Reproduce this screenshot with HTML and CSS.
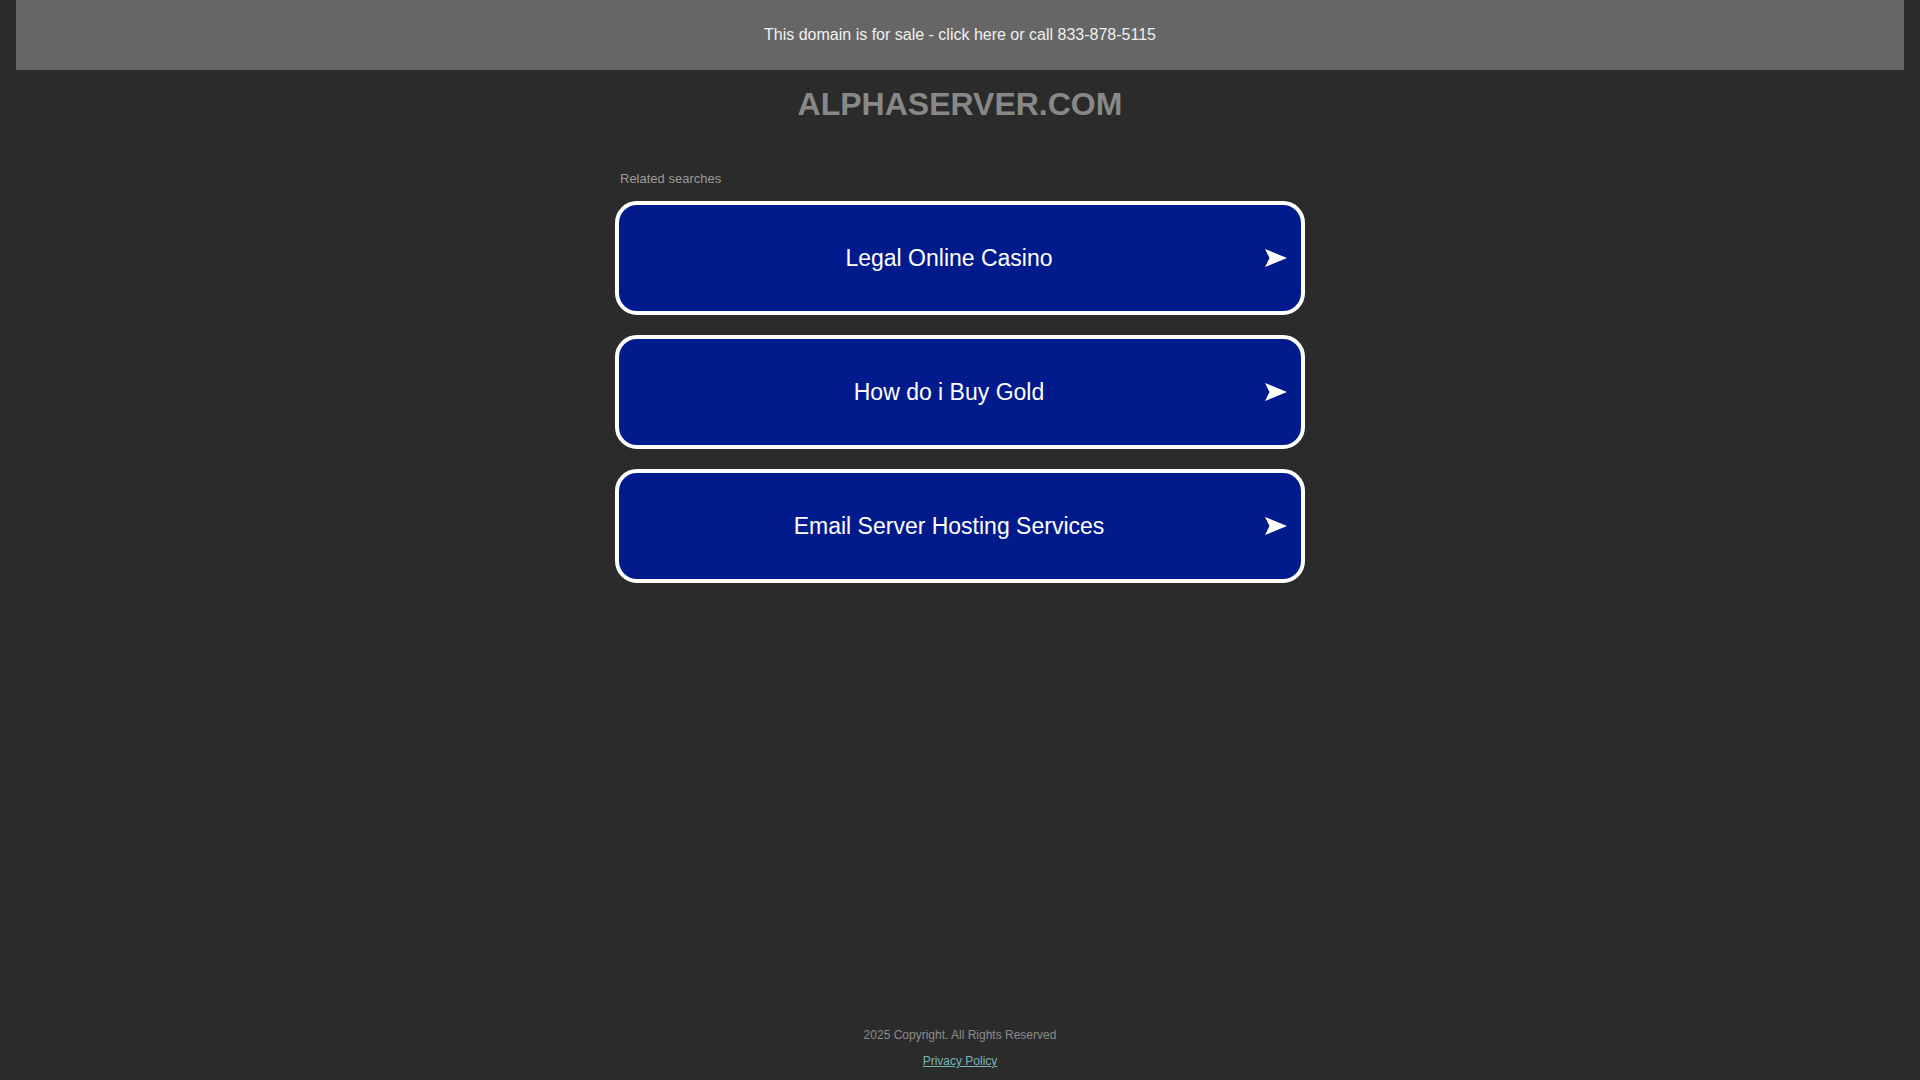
FILE: index.html
```html
<!DOCTYPE html>
<html lang="en">
<head>
<meta charset="utf-8">
<title>alphaserver.com</title>
<link rel="stylesheet" href="styles.css">
</head>
<body>
<div class="page">
  <div class="topbar"><a class="sale" href="#">This domain is for sale - click here or call 833-878-5115</a></div>
  <h1 class="domain">ALPHASERVER.COM</h1>
  <main class="searches">
    <div class="related">Related searches</div>
    <a class="result" href="#"><span class="label">Legal Online Casino</span><svg class="arrow" width="22" height="18" viewBox="0 0 22 18"><path d="M0 0 L22 9 L0 18 L4.5 9 Z" fill="#fff"/></svg></a>
    <a class="result" href="#"><span class="label">How do i Buy Gold</span><svg class="arrow" width="22" height="18" viewBox="0 0 22 18"><path d="M0 0 L22 9 L0 18 L4.5 9 Z" fill="#fff"/></svg></a>
    <a class="result" href="#"><span class="label">Email Server Hosting Services</span><svg class="arrow" width="22" height="18" viewBox="0 0 22 18"><path d="M0 0 L22 9 L0 18 L4.5 9 Z" fill="#fff"/></svg></a>
  </main>
  <footer class="footer">
    <div class="copy">2025 Copyright. All Rights Reserved</div>
    <a class="privacy" href="#">Privacy Policy</a>
  </footer>
</div>
</body>
</html>
```
FILE: styles.css
```css
html, body {
  margin: 0;
  padding: 0;
  background: #2b2b2b;
  font-family: "Liberation Sans", Arial, sans-serif;
}
.page {
  min-height: 100vh;
  display: flex;
  flex-direction: column;
  align-items: center;
}
.topbar {
  align-self: stretch;
  margin: 0 16px;
  height: 70px;
  background: #666666;
  display: flex;
  align-items: center;
  justify-content: center;
}
.sale {
  color: #f0f0f0;
  font-size: 16px;
  line-height: 18px;
  text-decoration: none;
}
.domain {
  margin: 16px 0 0;
  font-size: 32px;
  line-height: 37px;
  font-weight: bold;
  color: #888888;
}
.searches {
  width: 690px;
  margin-top: 48px;
  display: flex;
  flex-direction: column;
}
.related {
  font-size: 13px;
  line-height: 15px;
  color: #9a9a9a;
  padding-left: 5px;
  margin-bottom: 15px;
}
.result {
  box-sizing: border-box;
  height: 114px;
  margin-bottom: 20px;
  border: 4px solid #ffffff;
  border-radius: 22px;
  background: #011a8c;
  display: flex;
  align-items: center;
  justify-content: center;
  position: relative;
  text-decoration: none;
}
.label {
  color: #ffffff;
  font-size: 23px;
  line-height: 27px;
  padding-right: 22px;
  padding-top: 1px;
}
.arrow {
  position: absolute;
  right: 14px;
  top: 50%;
  margin-top: -9px;
}
.footer {
  margin-top: auto;
  padding-bottom: 11px;
  display: flex;
  flex-direction: column;
  align-items: center;
  font-size: 12px;
  line-height: 15px;
}
.copy {
  color: #8c8c8c;
  margin-bottom: 11px;
}
.privacy {
  color: #7ab4b7;
  text-decoration: underline;
}
```
